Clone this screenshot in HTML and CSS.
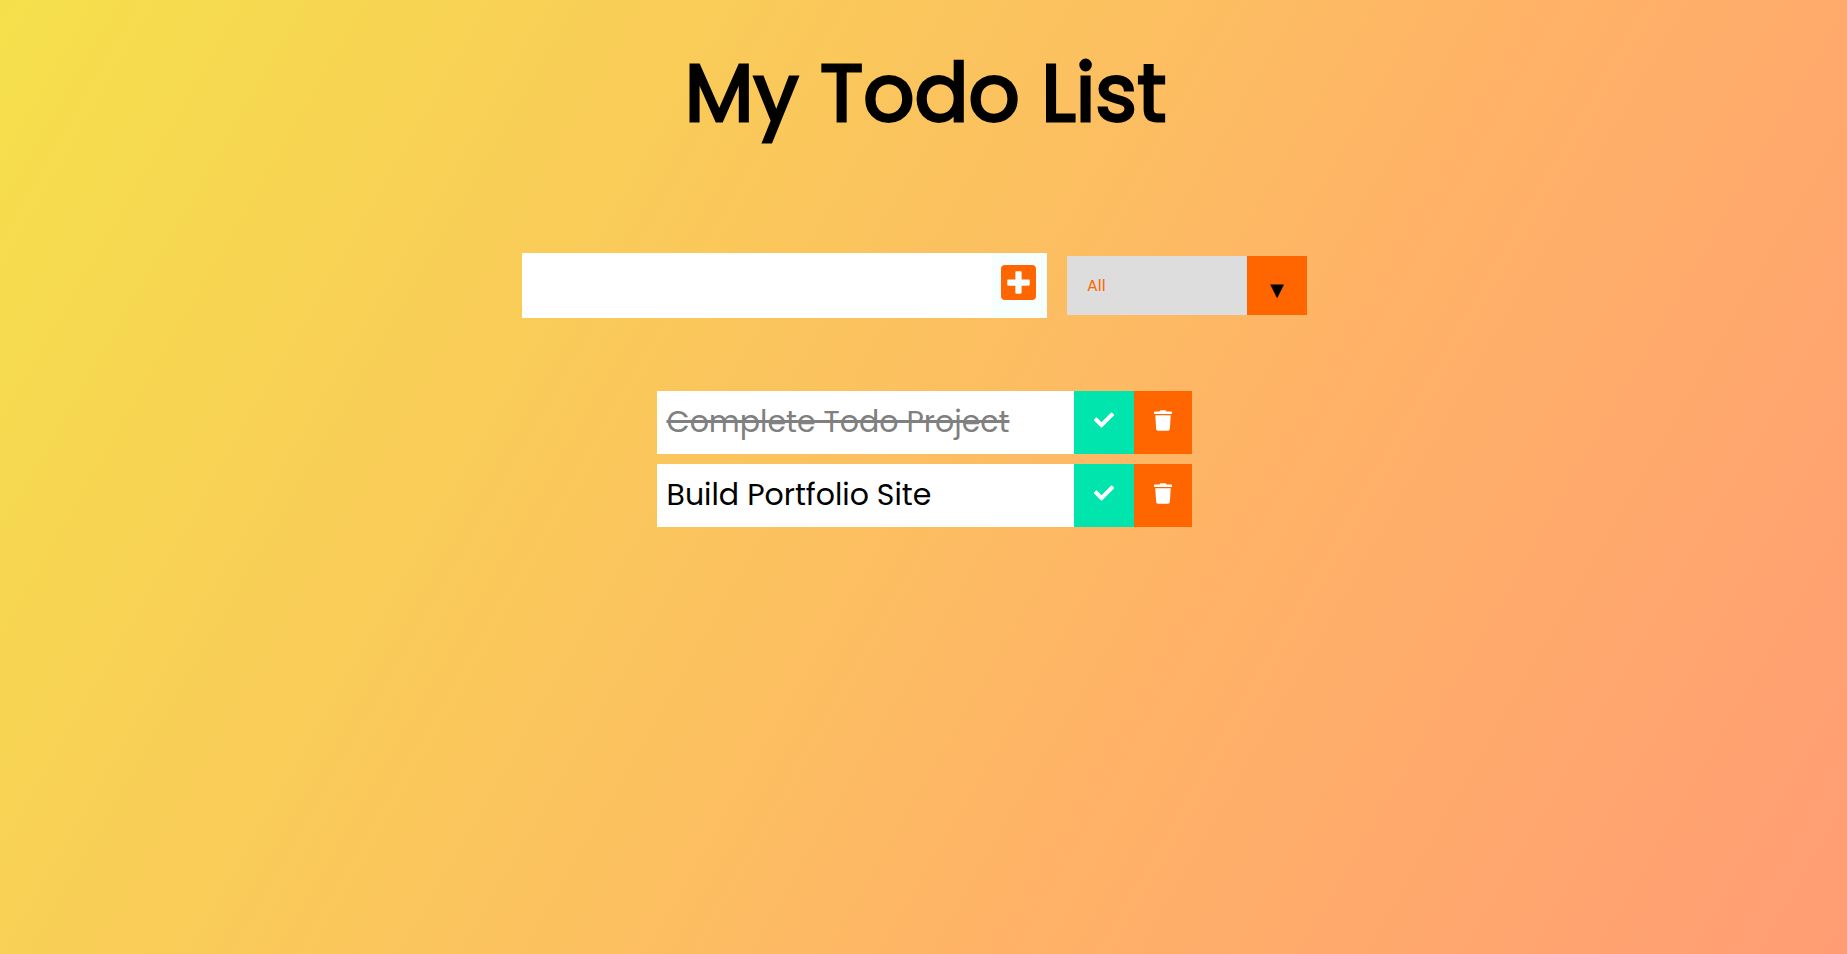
FILE: index.html
```html
<!DOCTYPE html>
<html lang="en">
<head>
<meta charset="utf-8">
<title>My Todo List</title>
<link rel="stylesheet" href="styles.css">
</head>
<body>
<svg class="defs" aria-hidden="true">
  <symbol id="plus" viewBox="0 32 448 448"><path d="M400 32H48C21.5 32 0 53.5 0 80v352c0 26.5 21.5 48 48 48h352c26.500 0 48-21.500 48-48V80c0-26.500-21.500-48-48-48zm-32 252c0 6.600-5.400 12-12 12h-92v92c0 6.600-5.400 12-12 12h-56c-6.600 0-12-5.400-12-12v-92H92c-6.600 0-12-5.400-12-12v-56c0-6.600 5.400-12 12-12h92v-92c0-6.600 5.400-12 12-12h56c6.600 0 12 5.400 12 12v92h92c6.600 0 12 5.400 12 12v56z"/></symbol>
  <symbol id="check" viewBox="0 0 512 512"><path d="M173.898 439.404l-166.400-166.400c-9.997-9.997-9.997-26.206 0-36.204l36.203-36.204c9.997-9.998 26.207-9.998 36.204 0L192 312.690 432.095 72.596c9.997-9.997 26.207-9.997 36.204 0l36.203 36.204c9.997 9.997 9.997 26.206 0 36.204l-294.400 294.401c-9.998 9.997-26.207 9.997-36.204-.001z"/></symbol>
  <symbol id="trash" viewBox="0 0 448 512"><path d="M432 32H312l-9.400-18.700A24 24 0 0 0 281.100 0H166.800a23.720 23.720 0 0 0-21.400 13.300L136 32H16A16 16 0 0 0 0 48v32a16 16 0 0 0 16 16h416a16 16 0 0 0 16-16V48a16 16 0 0 0-16-16zM53.200 467a48 48 0 0 0 47.900 45h245.800a48 48 0 0 0 47.900-45L416 128H32z"/></symbol>
</svg>
<header class="header"><h1 class="title">My Todo List</h1></header>
<form class="form">
  <input class="todo-input" type="text" aria-label="New todo">
  <button class="add" type="button" aria-label="Add"><svg class="icon-plus"><use href="#plus"/></svg></button>
  <div class="select"><span class="select-value">All</span><span class="select-arrow">▼</span></div>
</form>
<ul class="list">
  <li class="todo">
    <span class="label done">Complete Todo Project</span>
    <button class="complete" aria-label="Complete"><svg class="icon-check"><use href="#check"/></svg></button>
    <button class="remove" aria-label="Delete"><svg class="icon-trash"><use href="#trash"/></svg></button>
  </li>
  <li class="todo">
    <span class="label">Build Portfolio Site</span>
    <button class="complete" aria-label="Complete"><svg class="icon-check"><use href="#check"/></svg></button>
    <button class="remove" aria-label="Delete"><svg class="icon-trash"><use href="#trash"/></svg></button>
  </li>
</ul>
</body>
</html>
```

FILE: styles.css
```css
* { box-sizing: border-box; margin: 0; padding: 0; }
body {
  min-height: 100vh;
  font-family: Poppins, Inter, "Liberation Sans", sans-serif;
  color: #000;
  background: linear-gradient(120deg, #f5e04b, #fcbe61 50%, #ffb267 65%, #ff9c74);
}
button, input { border: 0; border-radius: 0; font: inherit; }
svg { display: block; fill: currentColor; }
.defs { display: none; }
.header { height: 253px; padding-top: 33px; padding-left: 4px; display: flex; justify-content: center; }
.title { font-size: 80px; line-height: 121px; font-weight: 400; -webkit-text-stroke: 2.8px #000; white-space: nowrap; }
.form { display: flex; align-items: flex-start; height: 138px; padding-left: 522px; }
.todo-input { width: 470px; height: 65px; background: #fff; }
.add { display: flex; width: 55px; height: 65px; padding: 12.3px 0 0 9.3px; background: #f7fffe; color: #ff6600; }
.icon-plus { width: 35px; height: 35px; }
.select { display: flex; width: 240px; height: 59px; margin: 3px 0 0 20px; }
.select-value { width: 180px; padding-left: 20px; background: #ddd; color: #ff6600; font-size: 16px; line-height: 59px; }
.select-arrow { width: 60px; background: #ff6600; text-align: center; font: 18px/68px "DejaVu Sans", sans-serif; }
.list { width: 535px; margin-left: 657px; list-style: none; display: grid; gap: 10px; }
.todo { display: flex; height: 63px; background: #fff; }
.label { width: 417px; padding-left: 9.5px; font-size: 30px; line-height: 62px; white-space: nowrap; }
.done { color: #808080; text-decoration: line-through; }
.complete, .remove { display: flex; height: 63px; color: #fff; }
.complete { width: 60px; padding: 19.3px 0 0 20px; background: #00e4ae; }
.remove { width: 58px; padding: 19.3px 0 0 20px; background: #ff6600; }
.icon-check { width: 20px; height: 20px; }
.icon-trash { width: 18px; height: 21px; }
```
